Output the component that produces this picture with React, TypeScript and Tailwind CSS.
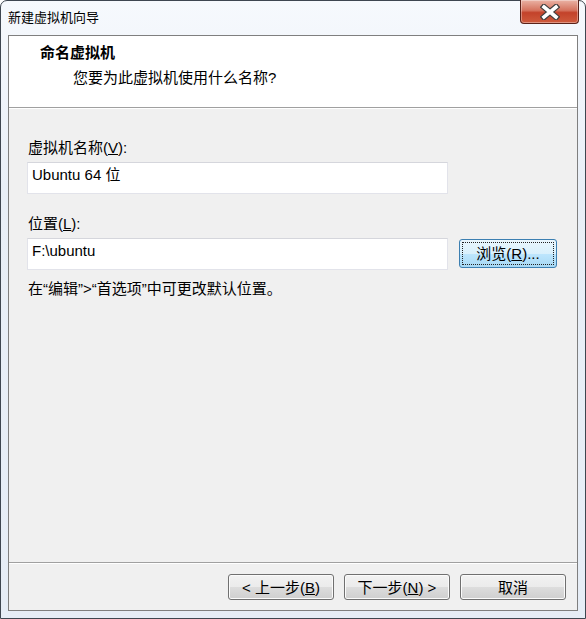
import React from "react";

const font = "font-['Microsoft_YaHei','Liberation_Sans','Noto_Sans_CJK_SC',sans-serif]";

function WinButton({ children }: { children: React.ReactNode }) {
  return (
    <button className="h-[26px] w-[106px] rounded-[3px] border border-[#707070] bg-[linear-gradient(to_bottom,#f2f2f2_0%,#ebebeb_50%,#dddddd_50%,#cfcfcf_100%)] shadow-[inset_0_0_0_1px_#fbfbfb] text-[15px] leading-none text-black">
      {children}
    </button>
  );
}

function CloseGlyph() {
  return (
    <svg width="20" height="16" viewBox="0 0 20 16">
      <path d="M4 3 L16 13 M16 3 L4 13" stroke="#3e3e3e" strokeWidth="6" strokeLinecap="square" fill="none" />
      <path d="M4 3 L16 13 M16 3 L4 13" stroke="#ffffff" strokeWidth="3.6" strokeLinecap="square" fill="none" />
    </svg>
  );
}

export default function App() {
  return (
    <div className={`${font} w-[586px] h-[619px] flex flex-col relative rounded-t-[7px] border border-[#3e4650] bg-[linear-gradient(to_bottom,#f6f9fd,#e9eff7_30%,#e6edf6)] text-black`}>
      {/* title bar */}
      <div className="h-[34px] flex items-center pl-[7px] pb-[1px] text-[13px]">
        新建虚拟机向导
      </div>
      <div className="absolute top-[-1px] right-[6px] w-[59px] h-[24px] rounded-b-[4px] border border-[#5a2219] border-t-0 bg-[linear-gradient(to_bottom,#eab3a5_0%,#d5735e_45%,#c3422a_55%,#cf5b3d_100%)] shadow-[inset_0_0_0_1px_rgba(255,255,255,0.35)] flex items-center justify-center">
        <CloseGlyph />
      </div>

      {/* client area */}
      <div className="flex-1 mx-[7px] mb-[7px] border border-[#7f7f7f] bg-[#f0f0f0] flex flex-col">
        <div className="h-[72px] bg-white border-b border-[#a0a0a0] pt-[8px] pl-[31px] text-[15px] leading-[18px]">
          <div className="font-bold">命名虚拟机</div>
          <div className="mt-[7px] pl-[33px]">您要为此虚拟机使用什么名称?</div>
        </div>
        <div className="border-t border-white" />

        <div className="flex-1 pl-[18px] pt-[30px] text-[15px] leading-[18px]">
          <div className="pl-[1px]">
            虚拟机名称(<u>V</u>):
          </div>
          <div className="mt-[5px] w-[421px] h-[32px] border border-[#e2e3ea] border-t-[#d5d6dc] bg-white pl-[4px] pt-[3px]">
            Ubuntu 64 位
          </div>

          <div className="mt-[21px] pl-[1px]">
            位置(<u>L</u>):
          </div>
          <div className="mt-[5px] flex items-start gap-[11px]">
            <div className="w-[421px] h-[32px] border border-[#e2e3ea] border-t-[#d5d6dc] bg-white pl-[4px] pt-[3px]">
              F:\ubuntu
            </div>
            <button className="relative mt-[1px] w-[98px] h-[29px] rounded-[3px] border border-[#3c7fb1] bg-[linear-gradient(to_bottom,#eaf6fd_0%,#d9f0fc_50%,#bee6fd_50%,#a7d9f5_100%)] text-[15px] leading-none">
              <span className="absolute inset-[2px] border border-dotted border-[#222]" />
              浏览(<u>R</u>)...
            </button>
          </div>

          <div className="mt-[10px] pl-[1px]">在“编辑”&gt;“首选项”中可更改默认位置。</div>
        </div>

        <div className="border-t border-[#a0a0a0]" />
        <div className="border-t border-white flex justify-end gap-[10px] pt-[10px] pb-[10px] pr-[11px]">
          <WinButton>
            &lt; 上一步(<u>B</u>)
          </WinButton>
          <WinButton>
            下一步(<u>N</u>) &gt;
          </WinButton>
          <WinButton>取消</WinButton>
        </div>
      </div>
    </div>
  );
}
